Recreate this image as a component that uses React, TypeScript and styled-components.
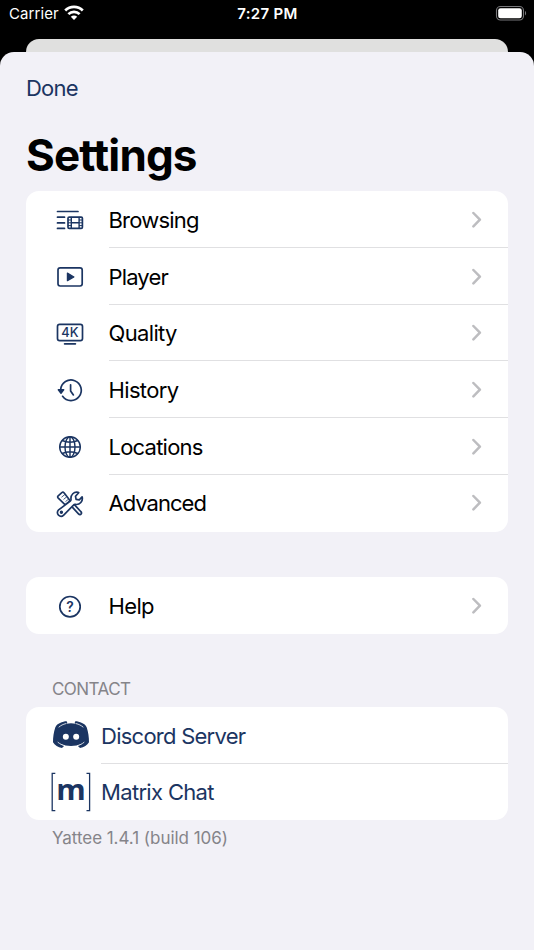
import React from "react";
import styled, { createGlobalStyle } from "styled-components";

const NAVY = "#1b3562";

const GlobalStyle = createGlobalStyle`
  * { box-sizing: border-box; }
  body {
    margin: 0;
    background: #000;
    font-family: Inter, "Liberation Sans", sans-serif;
  }
`;

const Screen = styled.div`
  height: 950px;
  display: flex;
  flex-direction: column;
  overflow: hidden;
  background: #000;
`;

const StatusBar = styled.header`
  height: 39px;
  flex: none;
  display: grid;
  grid-template-columns: 1fr auto 1fr;
  align-items: start;
  padding: 5px 7px 0 9px;
  color: #fff;
  font-size: 15px;
  line-height: 18px;
`;

const Carrier = styled.div`
  display: flex;
  gap: 5px;
  letter-spacing: 0.1px;
`;

const Clock = styled.div`
  font-weight: 600;
  letter-spacing: 0.3px;
  margin-left: -1px;
`;

const Battery = styled.svg`
  justify-self: end;
  display: block;
`;

const BackSheet = styled.div`
  height: 13px;
  flex: none;
  margin: 0 26px;
  border-radius: 13px 13px 0 0;
  background: #e0e0df;
`;

const Sheet = styled.main`
  flex: 1;
  display: flex;
  flex-direction: column;
  padding: 0 26px;
  border-radius: 14px 14px 0 0;
  background: #f2f1f7;
`;

const DoneButton = styled.button`
  align-self: flex-start;
  margin-top: 22px;
  padding: 0;
  border: 0;
  background: none;
  color: ${NAVY};
  font: 400 22px/28px Inter, sans-serif;
  letter-spacing: -0.8px;
`;

const Title = styled.h1`
  margin: 26px 0 0;
  height: 63px;
  font-size: 44px;
  line-height: 54px;
  font-weight: 700;
  letter-spacing: -0.85px;
  color: #000;
`;

const Card = styled.section<{ $gap?: number }>`
  flex: none;
  margin-top: ${(p) => p.$gap ?? 0}px;
  border-radius: 13px;
  background: #fff;
  overflow: hidden;
`;

const Row = styled.div<{ $link?: boolean }>`
  height: 56.75px;
  display: flex;
  align-items: center;
  padding-left: 24px;
  color: ${(p) => (p.$link ? NAVY : "#000")};
  & > svg { flex: none; }
`;

const RowBody = styled.div<{ $indent: number; $last?: boolean }>`
  flex: 1;
  height: 100%;
  display: flex;
  align-items: center;
  justify-content: space-between;
  margin-left: ${(p) => p.$indent}px;
  padding-right: 26px;
  padding-bottom: ${(p) => (p.$last ? 1.4 : 0)}px;
  border-bottom: ${(p) => (p.$last ? "0" : "1px solid #e0e0e2")};
`;

const Label = styled.span<{ $spacing: number }>`
  padding-top: 1.8px;
  font-size: 22px;
  line-height: 28px;
  letter-spacing: ${(p) => p.$spacing}px;
  white-space: nowrap;
`;

const SectionHeader = styled.h2`
  margin: 45px 0 0 26px;
  height: 28px;
  font-size: 17px;
  line-height: 20px;
  font-weight: 400;
  letter-spacing: -0.55px;
  color: #858489;
`;

const Footer = styled.footer`
  margin: 8px 0 0 26px;
  font-size: 17px;
  line-height: 20px;
  letter-spacing: -0.04px;
  color: #858489;
`;

const IconFrame = ({ children }: { children: React.ReactNode }) => (
  <svg width="40" height="40" viewBox="0 0 40 40" fill="none" stroke={NAVY} strokeWidth="1.7" strokeLinecap="round" strokeLinejoin="round">
    {children}
  </svg>
);

const BrowsingIcon = () => (
  <IconFrame>
    <path d="M7.5 12.5H28M7.5 18.2h7M7.5 23.9h7M7.5 29.4h7" />
    <rect x="18" y="18.1" width="14.4" height="11.3" rx="1.2" />
    <path d="M21.3 18.5v10.6M29.1 18.5v10.6M21.3 23.8h7.8" strokeWidth="1.4" />
    <path d="M18.4 21h2.6M18.4 23.8h2.6M18.4 26.6h2.6M29.4 21H32M29.4 23.8H32M29.4 26.6H32" strokeWidth="1" />
  </IconFrame>
);

const PlayerIcon = () => (
  <IconFrame>
    <rect x="8" y="11.8" width="24.2" height="18.2" rx="2.2" />
    <path d="M17.4 17.1v7.6l6.5-3.8z" fill={NAVY} strokeWidth="1.2" />
  </IconFrame>
);

const QualityIcon = () => (
  <IconFrame>
    <rect x="7.5" y="11.3" width="25" height="16.4" rx="2.2" />
    <path d="M14.6 30.8h10.8" />
    <text x="19.9" y="24.1" textAnchor="middle" textLength="17.2" lengthAdjust="spacingAndGlyphs" fill={NAVY} stroke="none" fontFamily="Inter, sans-serif" fontSize="12.8" fontWeight="500">4K</text>
  </IconFrame>
);

const HistoryIcon = () => (
  <IconFrame>
    <path d="M10.7 19.5a10.3 10.3 0 1 1 1.9 6.8" />
    <path d="M8.3 19.8h5.4l-2.7 3.4z" fill={NAVY} strokeWidth="1.4" />
    <path d="M20.6 14.8v6.1l2.8 4" />
  </IconFrame>
);

const GlobeIcon = () => (
  <IconFrame>
    <g strokeWidth="1.45">
      <circle cx="20" cy="21" r="10.3" />
      <ellipse cx="20" cy="21" rx="5" ry="10.3" />
      <path d="M20 10.7v20.6M9.7 21h20.6M12.3 14.5c4.4 2.3 11 2.3 15.4 0M12.3 27.5c4.4-2.3 11-2.3 15.4 0" />
    </g>
  </IconFrame>
);

const ToolsIcon = () => (
  <IconFrame>
    <g strokeWidth="1.7">
      <path d="M20.5 22.2l8 8.7c.9 1 2.1.9 2.6.2s.5-1.8-.4-2.6L23 20.2" />
      <path d="M8.2 12.8l3.6-3.2c.8-.6 1.7-.4 2.4.4l5 6.5c.7.9.7 1.5 0 2.1l-2.8 2.4c-.7.6-1.5.5-2.2-.2l-5.9-5.6c-.8-.8-.9-1.7-.1-2.4z" fill="#fff" />
      <path d="M11.8 14l2.7-2.2M13.8 16.2l2.7-2.2M15.8 18.4l2.4-2" strokeWidth=".8" />
      <path d="M8.6 26.9l11.7-8.8c.6-.5.8-1 .7-1.8-.5-4.5 2.9-8 7.2-7l.5.4-3.2 3.6.6 3.1 3.2.5 2.8-3.1c1.2 4.3-2.3 8.3-6.8 7.6-.8-.1-1.3.1-1.8.7l-9.8 10c-1.6 1.6-3.7 1.5-5.2.1s-1.5-3.9.1-5.3z" fill="#fff" />
      <circle cx="11.4" cy="29.3" r=".85" fill={NAVY} />
    </g>
  </IconFrame>
);

const HelpIcon = () => (
  <IconFrame>
    <circle cx="20" cy="20.7" r="10.2" />
    <text x="20" y="25.7" textAnchor="middle" fill={NAVY} stroke="none" fontFamily="Inter, sans-serif" fontSize="13.8" fontWeight="600">?</text>
  </IconFrame>
);

const DiscordIcon = () => (
  <svg width="42" height="40" viewBox="30 43 126 120" fill={NAVY}>
    <path d="M46 80C49 73 54 69 60 67C67 64 74 62 80 62L82 66L78 69C88 67 98 67 108 69L104 66L106 62C112 62 119 64 126 67C132 69 137 73 140 80C145 95 147 110 147 125C142 134 132 140 120 142L113 135C118 134 122 132 126 129C105 138 81 138 60 129C64 132 68 134 73 135L66 142C54 140 44 134 39 125C39 110 41 95 46 80Z" />
    <path d="M57 79C63 74 69 71 77 69M129 79C123 74 117 71 109 69M54 125C60 130 66 133 74 135M132 125C126 130 120 133 112 135" fill="none" stroke="#fff" strokeWidth="2.4" strokeLinecap="round" />
    <circle cx="77.5" cy="108" r="9" fill="#fff" />
    <circle cx="108.5" cy="108" r="9" fill="#fff" />
  </svg>
);

const MatrixIcon = () => (
  <svg width="42" height="40" viewBox="0 0 42 40" overflow="visible" fill="none" stroke={NAVY} strokeWidth="1.3">
    <path d="M5.3 1.3H2.2v37.4h3.1M36.5 1.3h3.1v37.4h-3.1" />
    <text x="21" y="27.5" textAnchor="middle" textLength="29.5" lengthAdjust="spacingAndGlyphs" fill={NAVY} stroke="none" fontFamily="Open Sans, sans-serif" fontSize="28" fontWeight="700">m</text>
  </svg>
);

const Chevron = () => (
  <svg width="10" height="18" viewBox="0 0 10 18" fill="none" stroke="#bdbdc0" strokeWidth="2.5" strokeLinecap="round" strokeLinejoin="round">
    <path d="M1.4 3L7.9 9.7l-6.5 6.7" />
  </svg>
);

const WifiIcon = () => (
  <svg width="20" height="16" viewBox="0 0 20 16" fill="none" stroke="#fff" strokeWidth="2.7">
    <path d="M1.2 5.5C6.1.7 13.9.7 18.8 5.5M4.4 9.1c3.1-3.1 8.1-3.1 11.2 0" />
    <path d="M6.8 11.8c1.8-1.8 4.6-1.8 6.4 0L10 15.1z" fill="#fff" stroke="none" />
  </svg>
);

const settings = [
  { label: "Browsing", Icon: BrowsingIcon, spacing: -0.8 },
  { label: "Player", Icon: PlayerIcon, spacing: -0.85 },
  { label: "Quality", Icon: QualityIcon, spacing: -0.65 },
  { label: "History", Icon: HistoryIcon, spacing: -0.65 },
  { label: "Locations", Icon: GlobeIcon, spacing: -0.77 },
  { label: "Advanced", Icon: ToolsIcon, spacing: -0.98 },
];

const contacts = [
  { label: "Discord Server", Icon: DiscordIcon, spacing: -0.75 },
  { label: "Matrix Chat", Icon: MatrixIcon, spacing: -0.67 },
];

export default function App() {
  return (
    <>
      <GlobalStyle />
      <Screen>
        <StatusBar>
          <Carrier>Carrier <WifiIcon /></Carrier>
          <Clock>7:27 PM</Clock>
          <Battery width="32" height="16" viewBox="0 0 32 16">
            <rect x="1.5" y="1.5" width="27" height="13.5" rx="4" fill="none" stroke="#77777a" strokeWidth="1.1" />
            <rect x="3.2" y="3.2" width="23.6" height="10" rx="2.3" fill="#fff" />
            <path d="M30 6.1c1.5.7 1.5 3.6 0 4.3z" fill="#77777a" />
          </Battery>
        </StatusBar>
        <BackSheet />
        <Sheet>
          <DoneButton>Done</DoneButton>
          <Title>Settings</Title>
          <Card>
            {settings.map(({ label, Icon, spacing }, i) => (
              <Row key={label}>
                <Icon />
                <RowBody $indent={18.5} $last={i === settings.length - 1}>
                  <Label $spacing={spacing}>{label}</Label>
                  <Chevron />
                </RowBody>
              </Row>
            ))}
          </Card>
          <Card $gap={45.7}>
            <Row>
              <HelpIcon />
              <RowBody $indent={18.5} $last>
                <Label $spacing={-0.65}>Help</Label>
                <Chevron />
              </RowBody>
            </Row>
          </Card>
          <SectionHeader>CONTACT</SectionHeader>
          <Card>
            {contacts.map(({ label, Icon, spacing }, i) => (
              <Row key={label} $link>
                <Icon />
                <RowBody $indent={9} $last={i === contacts.length - 1}>
                  <Label $spacing={spacing}>{label}</Label>
                </RowBody>
              </Row>
            ))}
          </Card>
          <Footer>Yattee 1.4.1 (build 106)</Footer>
        </Sheet>
      </Screen>
    </>
  );
}
